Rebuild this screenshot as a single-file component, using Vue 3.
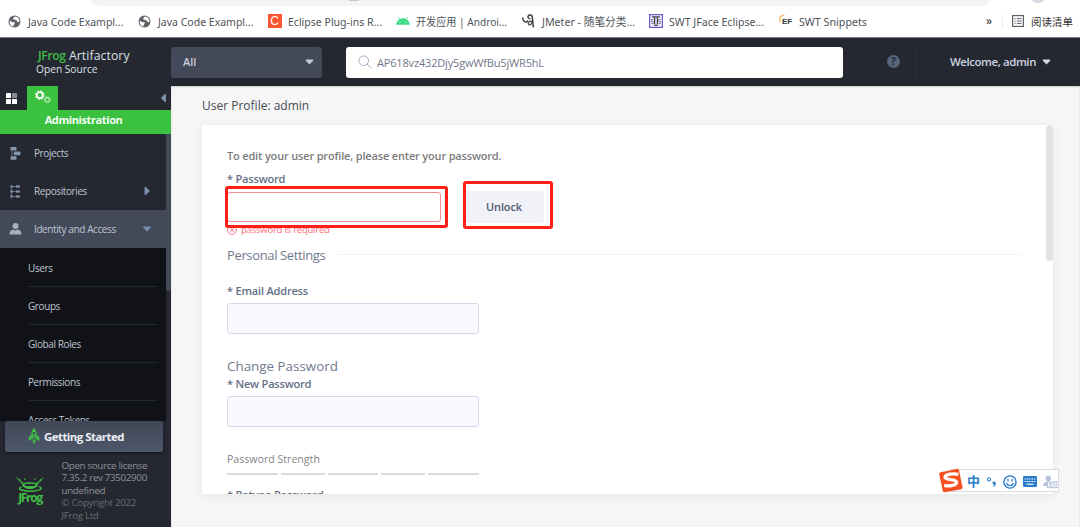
<script setup>
const bookmarks = [
  { icon: 'globe', text: 'Java Code Exampl...', w: 130, tw: 95.5 },
  { icon: 'globe', text: 'Java Code Exampl...', w: 129.5, tw: 95.5 },
  { icon: 'c', text: 'Eclipse Plug-ins R...', w: 128.5, tw: 94 },
  { icon: 'android', text: '开发应用 | Androi...', w: 125.5, tw: 91 },
  { icon: 'jmeter', text: 'JMeter - 随笔分类...', w: 127, tw: 93 },
  { icon: 'swt', text: 'SWT JFace Eclipse...', w: 130.5, tw: 95 },
  { icon: 'ef', text: 'SWT Snippets', w: 120, tw: 68 },
]
const subItems = ['Users', 'Groups', 'Global Roles', 'Permissions', 'Access Tokens']
const meter = [51, 44, 50, 44, 51]
</script>

<template>
  <div class="page">
    <div class="browser">
      <div class="omnibox"><i class="omni-mark"></i></div>
      <i class="avatar"></i>
      <div class="bookmarks">
        <div v-for="(b, i) in bookmarks" :key="i" class="bm" :style="{ width: b.w + 'px' }">
          <span class="bm-icon">
            <svg v-if="b.icon === 'globe'" width="13" height="13" viewBox="0 0 13 13">
              <circle cx="6.5" cy="6.5" r="6" fill="#5f6368" />
              <path d="M1.6 5.8 L4.6 7.2 L6.8 7.3 L6.4 9 L5 11.4 C2.7 10.9 1.3 8.5 1.6 5.8Z M6.9 1.6 L5 3.2 L6 4.7 L8.2 5 L9 6.6 L11.3 7.3 C11.8 4.2 9.8 1.9 6.9 1.6Z" fill="#fff" />
            </svg>
            <span v-else-if="b.icon === 'c'" class="c-icon">C</span>
            <svg v-else-if="b.icon === 'android'" width="14" height="14" viewBox="0 0 14 14">
              <path d="M0.2 10.8 C0.4 8.3 1.7 6.2 3.4 5.2 L2.2 3.2 L2.7 2.9 L4 5 C5.9 4.1 8.1 4.1 10 5 L11.3 2.9 L11.8 3.2 L10.6 5.2 C12.3 6.2 13.6 8.3 13.8 10.8Z" fill="#3ddc84" />
              <circle cx="4" cy="8.2" r=".6" fill="#fff" /><circle cx="10" cy="8.2" r=".6" fill="#fff" />
            </svg>
            <svg v-else-if="b.icon === 'jmeter'" width="13" height="14" viewBox="0 0 13 14" fill="none" stroke="#3c3c3c">
              <path d="M.7 3.5 C1.2 8.2 4 9.3 6.3 6.5 M6 3.8 C5.5 .2 10 0 10.3 3.2 L11.4 13.3" stroke-width="1.5" />
              <path d="M10.6 7.2 C6 6.5 5 10.8 7.6 11 C9.5 11 9.8 8.8 10.5 7.3 M6 3.8 L8.3 5.3" stroke-width="1.2" />
            </svg>
            <svg v-else-if="b.icon === 'swt'" width="14" height="14" viewBox="0 0 14 14">
              <rect x=".6" y=".6" width="12.8" height="12.8" fill="#eeeafc" stroke="#6a5acd" stroke-width="1.2" />
              <path d="M3 2.8 H11 M5.6 2.8 V10.5 M8.4 2.8 V10.5 M5.5 11.3 H8.5" stroke="#4a4652" stroke-width="1.3" />
              <path d="M4.6 5.5 H2.5 V7.5 H4.3 V9.5 H2.2 M11.7 5.5 H9.6 V7.5 H11.4 V9.5 H9.5" fill="none" stroke="#77708c" stroke-width=".8" />
            </svg>
            <span v-else class="ef-icon">EF
              <svg width="8" height="9" viewBox="0 0 8 9"><path d="M1.6 8 C-.5 4 2 .8 5.5 1" fill="none" stroke="#f5b04c" stroke-width="1.2" /></svg>
            </span>
          </span>
          <svg class="bm-text" :width="b.tw" height="16"><text x="0" y="12" :textLength="b.tw" lengthAdjust="spacingAndGlyphs">{{ b.text }}</text></svg>
        </div>
        <span class="more">»</span>
        <span class="reading">
          <svg width="12" height="12" viewBox="0 0 12 12" fill="none" stroke="#5f6368">
            <rect x=".6" y=".6" width="10.8" height="10.8" stroke-width="1.2" />
            <path d="M2.4 3.6 H3.6 M2.4 6 H3.6 M2.4 8.4 H3.6 M4.8 3.6 H9.6 M4.8 6 H9.6 M4.8 8.4 H9.6" />
          </svg>
          <span>阅读清单</span>
        </span>
      </div>
    </div>

    <header class="top">
      <div class="brand">
        <div class="brand-name"><b>JFrog</b> Artifactory</div>
        <div class="brand-sub">Open Source</div>
      </div>
      <div class="scope"><span>All</span>
        <svg width="9" height="6" viewBox="0 0 9 6"><path d="M1.2 .5 H7.8 Q8.8 .8 8.1 1.8 L4.5 5.6 L.9 1.8 Q.2 .8 1.2 .5Z" fill="#c3cad8" /></svg>
      </div>
      <div class="search">
        <svg width="14" height="14" viewBox="0 0 14 14" fill="none" stroke="#a2abbd" stroke-width="1"><circle cx="5.7" cy="5.7" r="4.8" /><path d="M9.2 9.2 L13 13.2" /></svg>
        <span>AP618vz432Djy5gwWfBu5jWR5hL</span>
      </div>
      <div class="help">?</div>
      <div class="welcome"><span>Welcome, admin</span>
        <svg width="9" height="6" viewBox="0 0 9 6"><path d="M1.2 .5 H7.8 Q8.8 .8 8.1 1.8 L4.5 5.6 L.9 1.8 Q.2 .8 1.2 .5Z" fill="#d5dbe8" /></svg>
      </div>
    </header>

    <div class="body">
      <aside class="side">
        <div class="tabs">
          <div class="tab-apps">
            <svg width="11" height="11" viewBox="0 0 11 11"><g fill="#fff"><rect width="5" height="5" rx=".6" /><rect y="6" width="5" height="5" rx=".6" /><rect x="6" y="6" width="5" height="5" rx=".6" /></g><rect x="6" width="5" height="5" rx=".6" fill="#8d8f94" /></svg>
          </div>
          <div class="tab-admin">
            <svg width="16" height="15" viewBox="0 0 16 15" fill="none">
              <circle cx="4.8" cy="5.2" r="3" stroke="#fff" stroke-width="1.7" />
              <circle cx="4.8" cy="5.2" r="4.2" stroke="#fff" stroke-width="1.1" stroke-dasharray="1.6 1.7" />
              <circle cx="12.3" cy="9.7" r="2.1" stroke="#b3eeb3" stroke-width="1.1" />
              <circle cx="12.3" cy="9.7" r="3.1" stroke="#b3eeb3" stroke-width="1" stroke-dasharray="1.2 1.235" />
            </svg>
          </div>
          <svg class="collapse" width="5" height="8" viewBox="0 0 5 8"><path d="M5 0 V8 H4 L.3 4.6 V3.4 L4 0Z" fill="#7f90a8" /></svg>
        </div>
        <div class="banner">Administration</div>
        <div class="nav">
          <div class="nav-list">
            <div class="item">
              <svg class="ni" width="11" height="13" viewBox="0 0 11 13"><g fill="#8797ab"><rect x=".5" y="0" width="6" height="3.6" rx=".6" /><rect x="4" y="4.6" width="6.5" height="3.6" rx=".6" /><rect x=".5" y="9.2" width="6" height="3.6" rx=".6" /></g><path d="M2 3.5 V9 M2 6.4 H5" stroke="#66778c" stroke-width=".8" /></svg>
              <span>Projects</span>
            </div>
            <div class="item">
              <svg class="ni" width="11" height="13" viewBox="0 0 11 13"><path d="M1.5 1.5 V11.5 M1 1.5 H9 M1 6.5 H9 M1 11.5 H9" stroke="#66778c" stroke-width=".9" /><g fill="#8797ab"><rect x=".4" y=".4" width="2.2" height="2.2" /><rect x=".4" y="5.4" width="2.2" height="2.2" /><rect x=".4" y="10.4" width="2.2" height="2.2" /><rect x="6" y=".4" width="3.8" height="2.2" /><rect x="6" y="5.4" width="3.8" height="2.2" /><rect x="6" y="10.4" width="3.8" height="2.2" /></g></svg>
              <span>Repositories</span>
              <svg class="arrow" width="8" height="8" viewBox="0 0 8 8"><path d="M1.5 0 H2.8 L6.5 3.5 V4.5 L2.8 8 H1.5Z" fill="#7b8ca8" /></svg>
            </div>
            <div class="item active">
              <svg class="ni person" width="13" height="12" viewBox="0 0 13 12"><g fill="#a6afbd"><circle cx="6.5" cy="3" r="3" /><path d="M.5 11.5 C.5 8 2.5 7 4.5 6.6 L6.5 7.5 L8.5 6.6 C10.5 7 12.5 8 12.5 11.5Z" /></g></svg>
              <span>Identity and Access</span>
              <svg class="arrow" width="8" height="6" viewBox="0 0 8 6"><path d="M.2 .5 H7.8 V1.5 L4.5 5.3 H3.5 L.2 1.5Z" fill="#7b8ca8" /></svg>
            </div>
            <div class="sub">
              <div v-for="s in subItems" :key="s" class="sub-item">{{ s }}</div>
            </div>
          </div>
          <div class="track"><div class="thumb"></div></div>
        </div>
        <div class="foot">
          <div class="start">
            <svg width="12" height="17" viewBox="0 0 12 17"><path d="M6 .3 C9 3 9 7 8.3 10.5 H3.7 C3 7 3 3 6 .3Z M3 6.8 L.6 9.6 V13 L3.5 11.4Z M9 6.8 L11.4 9.6 V13 L8.5 11.4Z M4.2 11.4 H7.8 L7 14 L6 16.5 L5 14Z" fill="#40be46" /><circle cx="6" cy="5.2" r="1.2" fill="#394452" /><path d="M6 7.5 V12.5" stroke="#394452" stroke-width=".7" /></svg>
            <span>Getting Started</span>
          </div>
          <div class="license">
            <div class="logo">
              <svg width="28" height="16" viewBox="0 0 28 16" fill="none" stroke="#40be46">
                <path d="M2.3 2 L6.5 6.2 L8.3 9 M25.7 2 L21.5 6.2 L19.7 9" stroke-width="1.6" stroke-dasharray="3 .6" />
                <circle cx="9" cy="2.3" r=".8" fill="#40be46" stroke="none" /><circle cx="19" cy="2.3" r=".8" fill="#40be46" stroke="none" /><circle cx=".9" cy=".9" r=".7" fill="#40be46" stroke="none" /><circle cx="27" cy=".9" r=".7" fill="#40be46" stroke="none" />
                <ellipse cx="14" cy="8" rx="7" ry="2" stroke-width="1.5" />
                <path d="M6.8 8.4 C9.5 12.6 18.5 12.6 21.2 8.4 C19 10.4 9 10.4 6.8 8.4Z" fill="#40be46" />
                <path d="M5.2 10 C.5 11.8 6 14.2 14 14.2 C22 14.2 29.5 11.5 22.8 9.6" stroke-width="1.5" />
              </svg>
              <b>JFrog</b>
            </div>
            <div class="ver">Open source license<br />7.35.2 rev 73502900<br />undefined<br /><span>© Copyright 2022<br />JFrog Ltd</span></div>
          </div>
        </div>
      </aside>

      <main class="main">
        <h1>User Profile: admin</h1>
        <div class="card">
          <div class="form">
            <p class="lead">To edit your user profile, please enter your password.</p>
            <label class="l-pass">* Password</label>
            <div class="unlock-row">
              <div class="field bad"></div>
              <div class="unlock">Unlock</div>
            </div>
            <div class="error">
              <svg width="10" height="10" viewBox="0 0 10 10" fill="none" stroke="#ff6b78" stroke-width=".9"><circle cx="5" cy="5" r="4.4" /><path d="M3.2 3.2 L6.8 6.8 M6.8 3.2 L3.2 6.8" /></svg>
              <span>password is required</span>
            </div>
            <div class="section"><span>Personal Settings</span><i></i></div>
            <label class="l-email">* Email Address</label>
            <div class="field"></div>
            <div class="section change"><span>Change Password</span></div>
            <label class="l-new">* New Password</label>
            <div class="field"></div>
            <div class="strength">Password Strength</div>
            <div class="meter"><i v-for="(m, i) in meter" :key="i" :style="{ width: m + 'px' }"></i></div>
            <label class="l-re">* Retype Password</label>
          </div>
          <div class="card-thumb"></div>
        </div>
      </main>
    </div>

    <div class="mark mark-input"></div>
    <div class="mark mark-unlock"></div>

    <div class="ime">
      <svg class="sogou" width="26" height="25" viewBox="0 0 26 25">
        <path d="M2.5 4.3 L19 .9 Q20.6 .6 21 2.2 L24.5 19.3 Q24.8 20.9 23.2 21.3 L7 24.2 Q5.3 24.5 4.8 22.9 L1.2 6.2 Q1 4.7 2.5 4.3Z" fill="#f4511e" />
        <path d="M20.3 6.3 C15 5.1 7.2 6.3 7 9.4 C6.9 12.4 18.5 10.7 18.6 14.1 C18.7 17.3 11 18.7 6.2 17.3" fill="none" stroke="#fff" stroke-width="3.3" />
      </svg>
      <div class="ime-bar">
        <span class="zh">中</span>
        <svg width="11" height="12" viewBox="0 0 11 12"><circle cx="3" cy="3.4" r="1.6" fill="none" stroke="#2b7ccb" stroke-width="1.1" /><path d="M7 5.8 C10.5 4.6 11 9.3 7.4 11 L7 10.3 C8 9.6 8.2 9 8 8.5 C6.3 8.4 6.2 6.3 7 5.8Z" fill="#2b7ccb" /></svg>
        <svg width="14" height="14" viewBox="0 0 14 14" fill="none" stroke="#2b7ccb"><circle cx="7" cy="7" r="6.1" stroke-width="1.4" /><path d="M5 3.8 V6.4 M9 3.8 V6.4 M3.5 8 C4.5 11.3 9.5 11.3 10.5 8" stroke-width="1.2" /></svg>
        <svg width="14" height="11" viewBox="0 0 14 11"><rect width="14" height="11" rx="1.2" fill="#2b7ccb" /><path d="M1.8 3 H12.2 M1.8 5.5 H12.2" stroke="#fff" stroke-width="1.2" stroke-dasharray="1.4 .85" /><path d="M3.5 8.2 H10.5" stroke="#fff" stroke-width="1.1" /></svg>
        <svg width="16" height="14" viewBox="0 0 16 14"><g fill="#b5c1d6"><circle cx="5.2" cy="3.4" r="2.7" /><path d="M.2 11 C.2 7.8 2 6.8 5 6.8 C8 6.8 9 7.5 9.5 11Z" /></g><rect x="4.5" y="7" width="11" height="5.6" fill="#f1f3f8" stroke="#b5c1d6" /><path d="M6.5 8.5 H8.5 L6.5 11 H9 M11 8.3 V11.3 M13.3 8.3 V11.3" stroke="#b5c1d6" fill="none" /></svg>
      </div>
    </div>
  </div>
</template>

<style>
body { margin: 0; overflow: hidden; }
</style>

<style scoped>
* { box-sizing: border-box; }
.page { position: relative; width: 1080px; height: 527px; overflow: hidden; display: flex; flex-direction: column; background: #f6f6f6; font-family: "Open Sans", "Noto Sans CJK SC", sans-serif; }
svg { display: block; flex: none; }
.browser { position: relative; height: 37px; background: #fff; flex: none; }
.omnibox { position: absolute; left: 88px; top: -22px; width: 906px; height: 28px; border-radius: 14px; background: #f1f3f4; }
.omni-mark { position: absolute; left: 261px; top: 21px; width: 10px; height: 2px; background: #c8c9cb; }
.avatar { position: absolute; left: 1030px; top: -13px; width: 16px; height: 16px; border-radius: 50%; background: #d9dbe2; }
.bookmarks { display: flex; align-items: center; height: 37px; padding: 5px 0 0 8px; font-family: "Noto Sans", "Noto Sans CJK SC", sans-serif; color: #45484c; }
.bm { display: flex; align-items: center; flex: none; }
.bm-icon { width: 20px; height: 14px; display: flex; align-items: center; flex: none; }
.bm-text { overflow: visible; margin-top: 1px; }
.bm-text text { font-size: 11px; fill: #505357; }
.c-icon { width: 14px; height: 14px; background: #fc5531; color: #fff; font: 12px/14px "Liberation Sans", sans-serif; text-align: center; }
.ef-icon { position: relative; padding: 1px 0 0 3px; font: bold 8px/14px "Liberation Sans", sans-serif; color: #333; }
.ef-icon svg { position: absolute; left: 0; top: 0; }
.more { width: 16px; margin-left: 87px; font-size: 12px; line-height: 14px; color: #333; }
.reading { display: flex; align-items: center; gap: 7px; height: 14px; padding-left: 9px; border-left: 1px solid #ececef; font-size: 10.5px; white-space: nowrap; color: #333; }

.top { height: 49px; flex: none; display: flex; align-items: center; background: #252831; border-top: 1px solid #777a80; color: #e7ebf3; }
.brand { width: 171px; padding: 0 0 1px 36px; flex: none; }
.brand-name { font-size: 12.2px; line-height: 14px; white-space: nowrap; padding-left: 2px; color: #dde0e6; letter-spacing: .1px; }
.brand-name b { color: #40be46; font-weight: 600; font-size: 12px; letter-spacing: -.3px; }
.brand-sub { font-size: 10.2px; line-height: 12px; color: #dde0e6; }
.scope { width: 151px; height: 31px; flex: none; border-radius: 3px; background: #434959; display: flex; align-items: center; justify-content: space-between; padding: 0 8px 0 12px; font-size: 11px; font-weight: 600; color: #c9cfdb; }
.scope span { padding-bottom: 2px; }
.search { width: 497px; height: 31px; margin-left: 24px; flex: none; border-radius: 3px; background: #fff; display: flex; align-items: center; gap: 5px; padding-left: 12px; font-size: 11px; letter-spacing: -.17px; color: #6f7889; }
.help { width: 13px; height: 13px; margin: -2px 0 0 44px; flex: none; border-radius: 50%; background: #54647a; color: #252831; font: bold 10px/13px "Open Sans", sans-serif; text-align: center; }
.welcome { height: 30px; margin-left: 15px; padding-left: 34px; border-left: 1px solid #2f333d; display: flex; align-items: center; font-size: 11.4px; font-weight: 600; color: #cdd3e0; white-space: nowrap; }
.welcome span { width: 92px; letter-spacing: -.4px; padding-bottom: 2px; }

.body { flex: 1; min-height: 0; display: flex; }
.side { width: 171px; flex: none; background: #252831; display: flex; flex-direction: column; color: #bdc4d1; }
.tabs { height: 24px; flex: none; display: flex; align-items: center; }
.tab-apps { width: 27px; padding-left: 6px; }
.tab-admin { width: 31px; height: 24px; background: #3ac13f; padding: 4px 0 0 8px; }
.collapse { margin-left: 103px; }
.banner { height: 24px; flex: none; background: #3ac13f; color: #f2fff2; font-size: 11px; line-height: 20px; font-weight: 700; letter-spacing: -.4px; text-align: center; padding-right: 4px; }
.nav { height: 287px; flex: none; display: flex; overflow: hidden; }
.nav-list { width: 166px; overflow: hidden; }
.track { flex: 1; background: #252831; }
.thumb { height: 157px; background: #434959; border-radius: 0 0 3px 3px; }
.item { height: 38px; display: flex; align-items: center; padding-left: 10px; font-size: 10px; letter-spacing: -.4px; }
.item span { margin-left: 13px; flex: 1; white-space: nowrap; }
.item .person { margin: 0 -1px 0 -1px; }
.item.active { background: #434959; }
.arrow { margin-right: 15px; }
.sub { background: #111217; padding: 1px 8px 0 28px; height: 190px; font-size: 10px; letter-spacing: -.4px; }
.sub-item { height: 38px; line-height: 38px; border-bottom: 1px solid #202830; }
.foot { flex: 1; padding: 0 8px 0 5px; background: #252831; }
.start { height: 31px; display: flex; align-items: center; gap: 4px; padding: 0 0 1px 23px; border-radius: 3px; background: linear-gradient(#404756, #4e586a); box-shadow: 0 1px 3px #15171d; color: #eef0f5; font-size: 11.4px; letter-spacing: -.5px; font-weight: 700; white-space: nowrap; }
.license { display: flex; padding-top: 7.5px; }
.logo { width: 56.5px; flex: none; padding: 17px 0 0 11px; color: #40be46; }
.logo b { display: block; width: 28px; text-align: center; font: bold 12px/10px "Open Sans", sans-serif; letter-spacing: -1.3px; }
.ver { font-size: 9.8px; line-height: 12.5px; letter-spacing: -.34px; color: #8d919b; white-space: nowrap; }
.ver span { color: #6b6b6d; }

.main { flex: 1; padding: 0 26px 0 31px; box-shadow: inset 0 1px 2px #ccc; }
h1 { margin: 0; padding-top: 10px; height: 39px; font-size: 12px; line-height: 19px; font-weight: 400; color: #454b55; }
.card { width: 851px; height: 369px; display: flex; background: #fff; box-shadow: 0 2px 8px #e6e6e6; overflow: hidden; }
.form { width: 844px; padding: 22px 0 0 25px; flex: none; }
.card-thumb { width: 7px; height: 136px; border-radius: 4px; background: #e2e2e2; }
.lead { margin: 0; height: 18px; font-size: 11px; line-height: 18px; font-weight: 600; letter-spacing: -.17px; color: #7c7c7c; }
label { display: block; height: 18px; font-size: 11px; line-height: 18px; font-weight: 600; letter-spacing: -.18px; color: #647084; }
.l-pass { margin-top: 5px; }
.unlock-row { display: flex; align-items: center; height: 32px; margin-top: 3px; }
.field { width: 252px; height: 31px; margin-top: 3px; border: 1px solid #d3d8eb; border-radius: 3px; background: #f9fafd; }
.field.bad { width: 214px; height: 30px; margin: 0; border-color: #f78e97; background: #fff; }
.unlock { width: 79px; height: 32px; margin-left: 24px; padding-right: 1px; border-radius: 3px; background: #f0f2f8; color: #515b6d; font-size: 11px; letter-spacing: -.1px; line-height: 31px; font-weight: 600; text-align: center; }
.error { display: flex; align-items: center; gap: 4px; height: 14px; font-size: 9.5px; letter-spacing: -.22px; color: #ff6b78; }
.error span { position: relative; top: -1px; }
.section { margin-top: 8px; height: 20px; display: flex; align-items: center; gap: 12px; font-size: 13px; line-height: 20px; letter-spacing: -.36px; color: #6f7a8c; }
.section span { padding-bottom: 1px; }
.section i { width: 685px; height: 1px; margin-top: -1px; background: #f3f3f3; }
.l-email { margin-top: 17px; }
.section.change { margin-top: 22px; font-size: 13.4px; letter-spacing: 0; }
.l-new { margin-top: -1px; }
.strength { margin-top: 23px; height: 18px; font-size: 10.6px; line-height: 18px; color: #858585; }
.meter { display: flex; gap: 3px; margin-top: 5px; }
.meter i { height: 2px; background: #dadada; }
.l-re { margin-top: 11px; }

.mark { position: absolute; border: 3px solid #ff1f16; border-radius: 3px; }
.mark-input { left: 225px; top: 186px; width: 223px; height: 42px; }
.mark-unlock { left: 463px; top: 181px; width: 90px; height: 48px; }
.ime { position: absolute; left: 938px; top: 468px; width: 121px; height: 25px; }
.sogou { position: absolute; left: 0; top: 0; }
.ime-bar { height: 23px; margin: 1px 0 0 12px; padding-left: 16px; display: flex; align-items: center; gap: 6px; border: 1px solid #d9dbe0; background: #fff; overflow: hidden; }
.zh { font: bold 13px/20px "Noto Sans CJK SC", sans-serif; color: #2b7ccb; }
.ime-bar svg { position: relative; top: 1px; }
</style>
